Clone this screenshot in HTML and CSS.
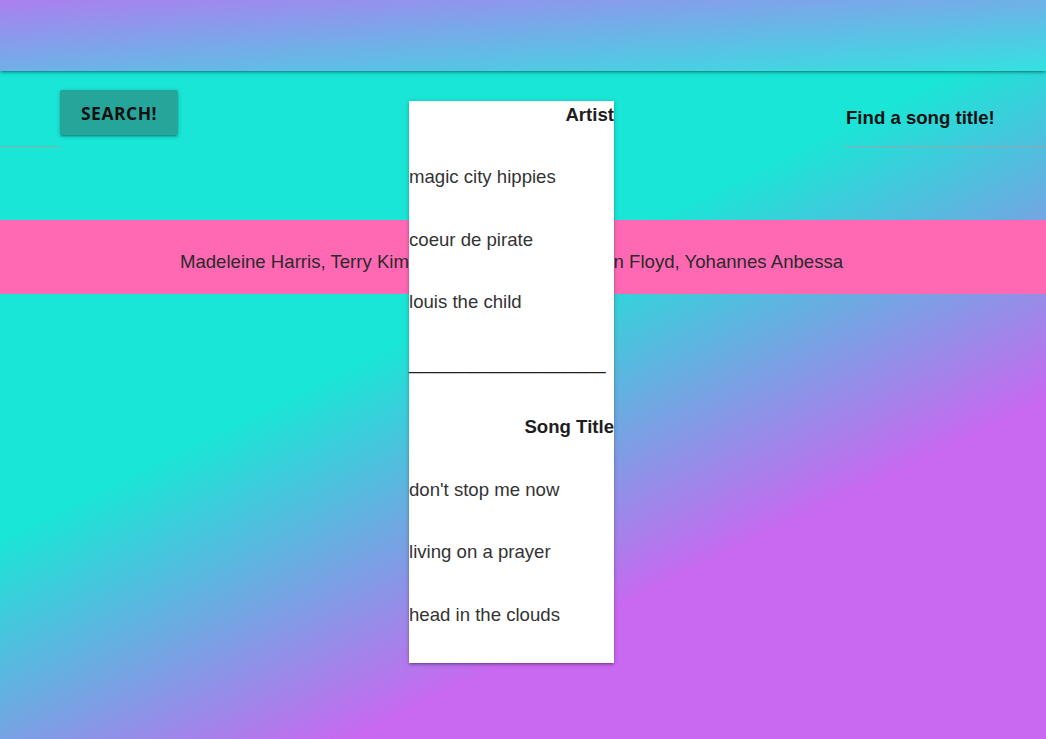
FILE: index.html
```html
<!DOCTYPE html>
<html lang="en">
<head>
<meta charset="utf-8">
<title>Song Search</title>
<link rel="stylesheet" href="styles.css">
</head>
<body>
  <header class="top-bar"></header>

  <nav class="search-bar">
    <div class="field field-left"></div>
    <button class="btn-search" type="button">SEARCH!</button>
    <div class="spacer"></div>
    <div class="field field-right">Find a song title!</div>
  </nav>

  <section class="credits">
    <p class="credits-text">Madeleine Harris, Terry Kim, Samantha Parks, Jordan Floyd, Yohannes Anbessa</p>
  </section>

  <div class="results-card">
    <div class="row heading">Artist</div>
    <div class="row">magic city hippies</div>
    <div class="row">coeur de pirate</div>
    <div class="row">louis the child</div>
    <div class="row divider">___________________</div>
    <div class="row heading">Song Title</div>
    <div class="row">don't stop me now</div>
    <div class="row">living on a prayer</div>
    <div class="row">head in the clouds</div>
  </div>
</body>
</html>
```
FILE: styles.css
```css
html {
  height: 100%;
  background: linear-gradient(154deg, #19e6d6 0%, #19e6d6 43%, #c968f0 73%, #c968f0 100%);
}

body {
  margin: 0;
  min-height: 100%;
  font-family: "Liberation Sans", Arial, sans-serif;
  color: #333;
}

.top-bar {
  height: 71px;
  background: linear-gradient(to bottom right, #ab7ff0, #33e2e0);
  box-shadow: 0 2px 2px 0 rgba(0,0,0,0.14), 0 3px 1px -2px rgba(0,0,0,0.12), 0 1px 5px 0 rgba(0,0,0,0.2);
  position: relative;
  z-index: 1;
}

.search-bar {
  height: 149px;
  display: flex;
  align-items: flex-start;
}

.field {
  box-sizing: border-box;
  height: 76px;
  border-bottom: 1px solid #9aa5a8;
}

.field-left {
  width: 60px;
}

.field-right {
  width: 201px;
  padding-top: 36px;
  padding-left: 1px;
  font-size: 18.6px;
  line-height: 21px;
  font-weight: bold;
  color: #111;
  white-space: nowrap;
}

.btn-search {
  margin-top: 19px;
  width: 118px;
  height: 45px;
  border: none;
  border-radius: 2px;
  background: #26a69a;
  color: #111;
  font-family: "Open Sans", sans-serif;
  font-weight: bold;
  font-size: 17.5px;
  letter-spacing: 0.5px;
  line-height: 47px;
  box-shadow: 0 2px 2px 0 rgba(0,0,0,0.14), 0 3px 1px -2px rgba(0,0,0,0.12), 0 1px 5px 0 rgba(0,0,0,0.2);
  padding: 0;
}

.spacer {
  flex: 1;
}

.credits {
  background: #ff69b4;
  padding: 31px 23px 22px 0;
  text-align: center;
}

.credits-text {
  margin: 0;
  font-size: 18.6px;
  line-height: 21px;
  color: #2a2a2a;
  white-space: nowrap;
}

.results-card {
  position: absolute;
  left: 409px;
  top: 101px;
  width: 205px;
  box-sizing: border-box;
  padding: 2.5px 0 38.5px;
  background: #fff;
  display: flex;
  flex-direction: column;
  gap: 41.5px;
  box-shadow: 0 2px 2px 0 rgba(0,0,0,0.14), 0 3px 1px -2px rgba(0,0,0,0.12), 0 1px 5px 0 rgba(0,0,0,0.2);
  font-size: 18.6px;
  line-height: 21px;
  color: #333;
}

.row {
  white-space: nowrap;
}

.divider {
  line-height: 17px;
  margin-bottom: 4px;
  color: #222;
}

.heading {
  text-align: right;
  font-weight: bold;
  color: #1e1e1e;
}
```
